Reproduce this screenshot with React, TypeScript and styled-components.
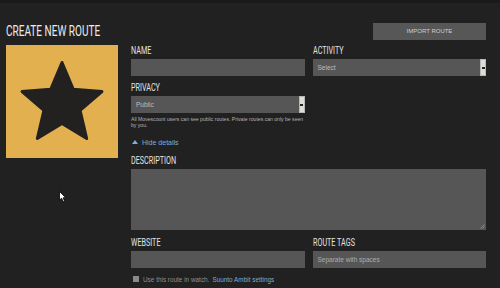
import React from "react";
import styled, { createGlobalStyle } from "styled-components";

const Global = createGlobalStyle`
  html, body { margin: 0; padding: 0; background: #212121; }
  body { font-family: "Liberation Sans", Arial, sans-serif; }
`;

const Page = styled.div`
  position: relative;
  width: 500px;
  height: 288px;
  box-sizing: border-box;
  overflow: hidden;
  background: #212121;
  border-top: 3px solid #1a1a1a;
  padding: 19px 14px 0 6px;
`;

const Header = styled.div`
  display: grid;
  grid-template-columns: 112px 1fr;
  column-gap: 13px;
  align-items: center;
  height: 18px;
  margin-bottom: 5px;
`;

const Title = styled.h1`
  margin: 0;
  font-family: Roboto, "DejaVu Sans", sans-serif;
  font-weight: 400;
  font-size: 15px;
  line-height: 18px;
  color: #ececec;
  white-space: nowrap;
  transform: scaleX(0.67);
  transform-origin: left center;
`;

const ImportButton = styled.button`
  justify-self: end;
  width: 113px;
  height: 17px;
  border: 0;
  padding: 0;
  background: #575757;
  color: #cfcfcf;
  font-family: "Liberation Sans", Arial, sans-serif;
  font-size: 6px;
  text-transform: uppercase;
`;

const Body = styled.div`
  display: grid;
  grid-template-columns: 112px 355px;
  column-gap: 13px;
  align-items: start;
`;

const Picture = styled.div`
  width: 112px;
  height: 113px;
  background: #e3b050;
  display: flex;
  align-items: center;
  justify-content: center;
`;

const Form = styled.div`
  display: flex;
  flex-direction: column;
`;

const Row = styled.div<{ $top?: number }>`
  display: grid;
  grid-template-columns: 1fr 1fr;
  column-gap: 8px;
  margin-top: ${(p) => p.$top ?? 0}px;
`;

const Field = styled.div<{ $top?: number }>`
  display: flex;
  flex-direction: column;
  margin-top: ${(p) => p.$top ?? 0}px;
`;

const Label = styled.div`
  height: 11px;
  line-height: 11px;
  margin-bottom: 3px;
  font-family: Roboto, "DejaVu Sans", sans-serif;
  font-size: 10px;
  color: #e4e4e4;
  white-space: nowrap;
  transform: scaleX(0.72);
  transform-origin: left center;
`;

const Input = styled.div`
  display: flex;
  align-items: center;
  height: 17px;
  box-sizing: border-box;
  padding-left: 5px;
  background: #565656;
  color: #adadad;
  font-size: 6.5px;
`;

const SelectBox = styled.div`
  display: flex;
  align-items: stretch;
  height: 17px;
  background: #565656;
  color: #bdbdbd;
  font-size: 6.5px;
`;

const SelectText = styled.span`
  flex: 1;
  display: flex;
  align-items: center;
  padding-left: 5px;
`;

const SelectArrow = styled.span`
  width: 6px;
  box-sizing: border-box;
  background: #dcdcd8;
  border: 1px solid #b8b8b4;
  display: flex;
  align-items: center;
  justify-content: center;
  &::after {
    content: "";
    width: 3px;
    height: 2px;
    background: #222;
  }
`;

const Help = styled.p`
  margin: 3px 0 0;
  font-size: 5.1px;
  line-height: 6px;
  color: #b4b4b4;
`;

const Toggle = styled.div`
  display: flex;
  align-items: center;
  gap: 2px;
  margin-top: 10px;
  height: 8px;
  font-size: 7px;
  color: #7fb0d2;
`;

const Tri = styled.span`
  width: 0;
  height: 0;
  margin: 0 2px 0 1px;
  border-left: 3px solid transparent;
  border-right: 3px solid transparent;
  border-bottom: 4px solid #7fb0d2;
`;

const TextArea = styled.div`
  position: relative;
  height: 61px;
  background: #565656;
`;

const Grip = styled.svg`
  position: absolute;
  right: 1px;
  bottom: 1px;
`;

const CheckRow = styled.div`
  display: flex;
  align-items: center;
  height: 8px;
  margin-top: 7px;
  padding-left: 2px;
  font-size: 6.4px;
  color: #8e8e8e;
`;

const Check = styled.span`
  width: 6px;
  height: 6px;
  background: #8a8a8a;
  margin-right: 4px;
`;

const Link = styled.span`
  color: #79acd0;
  margin-left: 3px;
`;

const Cursor = styled.svg`
  position: absolute;
  left: 59px;
  top: 188px;
`;

function starPoints(cx: number, cy: number, R: number, r: number): string {
  const pts: string[] = [];
  for (let i = 0; i < 10; i++) {
    const a = (Math.PI / 5) * i - Math.PI / 2;
    const rad = i % 2 === 0 ? R : r;
    pts.push(`${(cx + rad * Math.cos(a)).toFixed(2)},${(cy + rad * Math.sin(a)).toFixed(2)}`);
  }
  return pts.join(" ");
}

export default function App() {
  return (
    <>
      <Global />
      <Page>
        <Header>
          <Title>CREATE NEW ROUTE</Title>
          <ImportButton>Import Route</ImportButton>
        </Header>
        <Body>
          <Picture>
            <svg width="112" height="113" viewBox="0 0 112 113">
              <polygon
                points={starPoints(56, 59.5, 42, 19)}
                fill="#222120"
                stroke="#222120"
                strokeWidth="3"
                strokeLinejoin="round"
              />
            </svg>
          </Picture>
          <Form>
            <Row>
              <Field>
                <Label>NAME</Label>
                <Input />
              </Field>
              <Field>
                <Label>ACTIVITY</Label>
                <SelectBox>
                  <SelectText>Select</SelectText>
                  <SelectArrow />
                </SelectBox>
              </Field>
            </Row>
            <Row $top={6}>
              <Field>
                <Label>PRIVACY</Label>
                <SelectBox>
                  <SelectText>Public</SelectText>
                  <SelectArrow />
                </SelectBox>
              </Field>
            </Row>
            <Help>
              All Movescount users can see public routes. Private routes can only be seen
              <br />
              by you.
            </Help>
            <Toggle>
              <Tri />
              Hide details
            </Toggle>
            <Field $top={9}>
              <Label>DESCRIPTION</Label>
              <TextArea>
                <Grip width="5" height="5" viewBox="0 0 5 5">
                  <path d="M4.5 0.5 L0.5 4.5 M4.5 2.5 L2.5 4.5" stroke="#9a9a9a" strokeWidth="0.8" />
                </Grip>
              </TextArea>
            </Field>
            <Row $top={7}>
              <Field>
                <Label>WEBSITE</Label>
                <Input />
              </Field>
              <Field>
                <Label>ROUTE TAGS</Label>
                <Input>Separate with spaces</Input>
              </Field>
            </Row>
            <CheckRow>
              <Check />
              Use this route in watch.
              <Link>Suunto Ambit settings</Link>
            </CheckRow>
          </Form>
        </Body>
        <Cursor width="8" height="12" viewBox="0 0 8 12">
          <path d="M0.5 0.5 L0.5 9 L2.6 7.2 L4.2 10.8 L5.6 10.2 L4.1 6.8 L6.8 6.8 Z" fill="#fff" stroke="#000" strokeWidth="0.8" />
        </Cursor>
      </Page>
    </>
  );
}
